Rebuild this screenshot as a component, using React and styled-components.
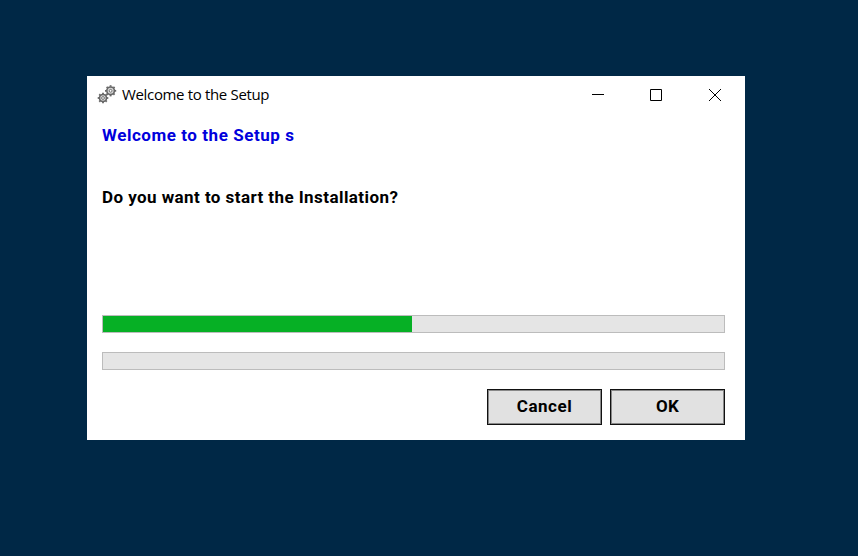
import React from "react";
import styled, { createGlobalStyle } from "styled-components";

const GlobalStyle = createGlobalStyle`
  * { box-sizing: border-box; }
  body { margin: 0; background: #002846; }
`;

const Desktop = styled.main`
  width: 858px;
  height: 556px;
  padding: 76px 0 0 87px;
  background: #002846;
  overflow: hidden;
`;

const Dialog = styled.section`
  display: flex;
  flex-direction: column;
  width: 658px;
  height: 364px;
  background: #fff;
  color: #000;
  font-family: Roboto, sans-serif;
`;

const TitleBar = styled.header`
  display: flex;
  align-items: center;
  height: 38px;
  padding: 0 1px 0 10px;
`;

const AppIcon = styled.svg`
  width: 20px;
  height: 20px;
  margin-right: 5px;
`;

const WindowTitle = styled.h1`
  flex: 1;
  margin: 0;
  padding-bottom: 2px;
  font: 400 15px/20px "Open Sans", sans-serif;
  letter-spacing: ${(p) => p.$spacing}px;
  white-space: nowrap;
`;

const CaptionButton = styled.button`
  display: flex;
  align-items: center;
  justify-content: center;
  width: 58.5px;
  height: 38px;
  padding: 0;
  border: 0;
  background: transparent;
  svg { width: 14px; height: 14px; fill: none; stroke: #000; }
`;

const Content = styled.div`
  display: flex;
  flex-direction: column;
  padding: 11px 20px 0 15px;
`;

const Message = styled.p`
  margin: 0 0 ${(p) => p.$gap}px;
  height: 20px;
  font-size: 17px;
  line-height: 20px;
  font-weight: 700;
  letter-spacing: ${(p) => p.$spacing}px;
  white-space: nowrap;
  color: ${(p) => p.$color};
`;

const ProgressTrack = styled.div`
  height: 18px;
  margin-bottom: ${(p) => p.$gap}px;
  border: 1px solid #bcbcbc;
  background: #e5e5e5;
`;

const ProgressFill = styled.div`
  width: ${(p) => p.$width}px;
  height: 100%;
  background: #06b025;
`;

const Actions = styled.footer`
  display: flex;
  justify-content: flex-end;
  gap: 8px;
`;

const ActionButton = styled.button`
  width: ${(p) => p.$width}px;
  height: 36px;
  padding: 0 0 2px;
  border: 1px solid #111;
  box-shadow: inset 0 0 0 1px #888;
  background: #e1e1e1;
  color: #000;
  font: 700 17px/20px Roboto, sans-serif;
  letter-spacing: ${(p) => p.$spacing}px;
`;

const teeth = [0, 45, 90, 135, 180, 225, 270, 315];

function Gear({ x, y, r }) {
  return (
    <g transform={`translate(${x} ${y})`} stroke="#666">
      {teeth.map((a) => (
        <path key={a} d={`M0 ${-r + 1.3}V${-r - 0.2}`} strokeWidth="1.8" transform={`rotate(${a})`} />
      ))}
      <circle r={r - 1.6} fill="#d8d8d8" strokeWidth="1.6" />
      <circle r="1.4" fill="#fff" strokeWidth="0.9" />
    </g>
  );
}

export default function App() {
  return (
    <>
      <GlobalStyle />
      <Desktop>
        <Dialog>
          <TitleBar>
            <AppIcon viewBox="0 0 20 20">
              <Gear x={13.6} y={5.8} r={5.4} />
              <Gear x={6} y={13} r={5.1} />
            </AppIcon>
            <WindowTitle $spacing={-0.34}>Welcome to the Setup</WindowTitle>
            <CaptionButton aria-label="Minimize">
              <svg viewBox="0 0 14 14"><path d="M1 6.5H13" /></svg>
            </CaptionButton>
            <CaptionButton aria-label="Maximize">
              <svg viewBox="0 0 14 14"><path d="M1.5 1.5H12.5V12.5H1.5Z" /></svg>
            </CaptionButton>
            <CaptionButton aria-label="Close">
              <svg viewBox="0 0 14 14"><path d="M1 1L13 13M13 1L1 13" /></svg>
            </CaptionButton>
          </TitleBar>
          <Content>
            <Message $color="#0000dc" $gap={42} $spacing={0.55}>Welcome to the Setup s</Message>
            <Message $color="#000" $gap={108} $spacing={0.43}>Do you want to start the Installation?</Message>
            <ProgressTrack $gap={19}><ProgressFill $width={309} /></ProgressTrack>
            <ProgressTrack $gap={19}><ProgressFill $width={0} /></ProgressTrack>
            <Actions>
              <ActionButton $width={115} $spacing={0.5}>Cancel</ActionButton>
              <ActionButton $width={115} $spacing={0.2}>OK</ActionButton>
            </Actions>
          </Content>
        </Dialog>
      </Desktop>
    </>
  );
}
